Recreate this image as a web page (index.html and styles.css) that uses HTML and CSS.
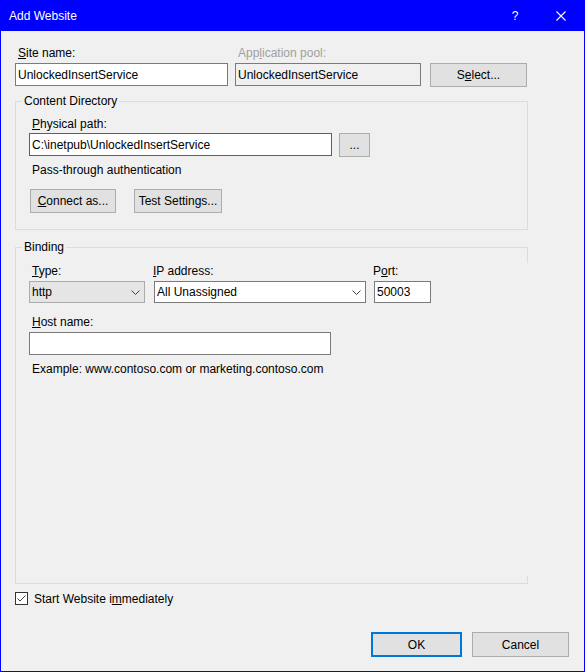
FILE: index.html
```html
<!DOCTYPE html>
<html>
<head>
<meta charset="utf-8">
<title>Add Website</title>
<link rel="stylesheet" href="styles.css">
</head>
<body>
<div class="window">
  <div class="titlebar">
    <span class="title">Add Website</span>
    <span class="tb-btn">?</span>
    <span class="tb-btn"><svg width="10" height="10" viewBox="0 0 10 10"><path d="M0.5 0.5L9.5 9.5M9.5 0.5L0.5 9.5" stroke="#fff" stroke-width="1.1" fill="none"/></svg></span>
  </div>
  <div class="content">
    <div class="top-row">
      <div class="col col-site">
        <div class="label"><u>S</u>ite name:</div>
        <div class="textbox">UnlockedInsertService</div>
      </div>
      <div class="col col-pool">
        <div class="label disabled">App<u>l</u>ication pool:</div>
        <div class="textbox readonly">UnlockedInsertService</div>
      </div>
      <div class="col col-select">
        <div class="label">&nbsp;</div>
        <div class="button">S<u>e</u>lect...</div>
      </div>
    </div>

    <div class="group group-content">
      <div class="group-title">Content Directory</div>
      <div class="label"><u>P</u>hysical path:</div>
      <div class="path-row">
        <div class="textbox focused path-box">C:\inetpub\UnlockedInsertService</div>
        <div class="button btn-browse">...</div>
      </div>
      <div class="label auth-text">Pass-through authentication</div>
      <div class="btn-row">
        <div class="button btn-connect"><u>C</u>onnect as...</div>
        <div class="button btn-test">Test Settings...</div>
      </div>
    </div>

    <div class="group group-binding">
      <div class="group-title">Binding</div>
      <div class="binding-row">
        <div class="col col-type">
          <div class="label"><u>T</u>ype:</div>
          <div class="combo combo-list"><span>http</span><svg class="chev" width="9" height="5" viewBox="0 0 9 5"><path d="M0.5 0.5L4.5 4.5L8.5 0.5" stroke="#444" stroke-width="1" fill="none"/></svg></div>
        </div>
        <div class="col col-ip">
          <div class="label label-tight"><u>I</u>P address:</div>
          <div class="combo"><span>All Unassigned</span><svg class="chev" width="9" height="5" viewBox="0 0 9 5"><path d="M0.5 0.5L4.5 4.5L8.5 0.5" stroke="#444" stroke-width="1" fill="none"/></svg></div>
        </div>
        <div class="col col-port">
          <div class="label label-tight">P<u>o</u>rt:</div>
          <div class="textbox port-box">50003</div>
        </div>
      </div>
      <div class="label host-label"><u>H</u>ost name:</div>
      <div class="textbox host-box"></div>
      <div class="label example">Example: www.contoso.com or marketing.contoso.com</div>
    </div>

    <div class="check-row">
      <span class="checkbox"><svg width="11" height="11" viewBox="0 0 11 11"><path d="M1.5 5.5L4 8L9.5 2.5" stroke="#444" stroke-width="1" fill="none"/></svg></span>
      <span class="check-label">Start Website i<u>m</u>mediately</span>
    </div>

    <div class="footer">
      <div class="button btn-ok">OK</div>
      <div class="button btn-cancel">Cancel</div>
    </div>
  </div>
</div>
</body>
</html>
```
FILE: styles.css
```css
* {
  box-sizing: border-box;
}

html,
body {
  margin: 0;
  padding: 0;
}

body {
  font-family: "Liberation Sans", Arial, sans-serif;
  font-size: 12px;
  line-height: 15px;
  color: #000;
  background: #fff;
}

u {
  text-underline-offset: 1px;
}

.window {
  width: 585px;
  height: 672px;
  background: #0000ff;
  padding: 0 1px 1px 1px;
  display: flex;
  flex-direction: column;
}

.titlebar {
  height: 31px;
  flex: none;
  display: flex;
  color: #fff;
  line-height: 31px;
}

.title {
  flex: 1;
  padding-left: 8px;
  padding-top: 1px;
}

.tb-btn {
  width: 46px;
  display: flex;
  align-items: center;
  justify-content: center;
  padding-top: 1px;
}

.content {
  flex: 1;
  background: #f0f0f0;
  display: flex;
  flex-direction: column;
  padding: 14px;
}

.top-row {
  display: flex;
  align-items: flex-start;
}

.col-site {
  width: 213px;
  margin-right: 7px;
}

.col-pool {
  width: 186px;
  margin-right: 9px;
}

.col-select {
  width: 97px;
}

.label {
  height: 15px;
  padding-left: 3px;
  padding-top: 1px;
  line-height: 14px;
  white-space: nowrap;
}

.col .label {
  margin-bottom: 3px;
}

.label-tight {
  padding-left: 0;
  margin-left: -1px;
}

.disabled {
  color: #a0a0a0;
}

.textbox {
  height: 23px;
  border: 1px solid #7a7a7a;
  background: #fff;
  padding: 1px 2px 0 2px;
  line-height: 20px;
  white-space: nowrap;
  overflow: hidden;
}

.readonly {
  background: #f0f0f0;
}

.focused {
  border-color: #0078d7;
}

.button {
  height: 24px;
  border: 1px solid #adadad;
  background: #e1e1e1;
  display: flex;
  align-items: center;
  justify-content: center;
  white-space: nowrap;
  padding-top: 1px;
}

.group {
  position: relative;
  width: 513px;
  border: 1px solid #dcdcdc;
  padding: 14px 13px 0 13px;
  flex: none;
}

.group-title {
  position: absolute;
  top: -8px;
  left: 6px;
  padding: 0 2px;
  background: #f0f0f0;
  line-height: 15px;
}

.group-content {
  margin-top: 14px;
  height: 129px;
}

.path-row {
  display: flex;
  align-items: flex-start;
  margin-top: 2px;
}

.path-box {
  width: 303px;
  margin-right: 7px;
}

.btn-browse {
  width: 31px;
}

.auth-text {
  margin-top: 5px;
}

.btn-row {
  display: flex;
  margin-top: 12px;
}

.btn-connect {
  width: 86px;
  margin-left: 1px;
}

.btn-test {
  width: 88px;
  margin-left: 18px;
}

.group-binding {
  margin-top: 17px;
  height: 337px;
  padding-top: 15px;
  border-right: none;
  background:
    linear-gradient(#dcdcdc, #dcdcdc) right top / 1px 15px no-repeat,
    linear-gradient(#dcdcdc, #dcdcdc) right bottom / 1px 7px no-repeat;
}

.binding-row {
  display: flex;
  align-items: flex-start;
}

.col-type {
  width: 116px;
  margin-right: 9px;
}

.col-ip {
  width: 212px;
  margin-right: 8px;
}

.col-port {
  width: 57px;
}

.combo {
  height: 22px;
  border: 1px solid #7a7a7a;
  background: #fff;
  display: flex;
  align-items: center;
  justify-content: space-between;
  padding: 1px 4px 0 2px;
  white-space: nowrap;
}

.combo-list {
  background: #e5e5e5;
  border-color: #acacac;
}

.chev {
  display: block;
}

.port-box {
  height: 22px;
  line-height: 19px;
}

.host-label {
  margin-top: 11px;
  margin-bottom: 3px;
}

.host-box {
  width: 302px;
}

.example {
  margin-top: 6px;
}

.check-row {
  display: flex;
  align-items: center;
  height: 15px;
  margin-top: 7px;
}

.checkbox {
  width: 13px;
  height: 13px;
  border: 1px solid #333;
  background: #fff;
  margin-right: 6px;
  display: flex;
}

.check-label {
  padding-top: 1px;
}

.footer {
  margin-top: auto;
  display: flex;
  justify-content: flex-end;
  gap: 10px;
  padding-right: 1px;
}

.btn-ok {
  width: 91px;
  height: 25px;
  border: 2px solid #0078d7;
}

.btn-cancel {
  width: 97px;
  height: 25px;
}
```
